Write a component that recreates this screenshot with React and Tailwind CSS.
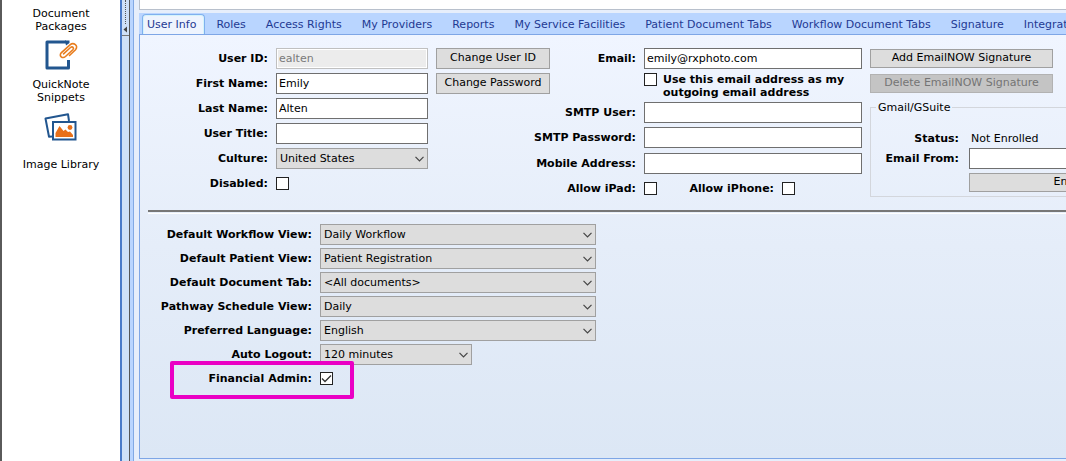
import React, { useState } from 'react';

const tabs = [
  'User Info',
  'Roles',
  'Access Rights',
  'My Providers',
  'Reports',
  'My Service Facilities',
  'Patient Document Tabs',
  'Workflow Document Tabs',
  'Signature',
  'Integrations',
];

const defaults = [
  { id: 'workflow-view', label: 'Default Workflow View:', value: 'Daily Workflow' },
  { id: 'patient-view', label: 'Default Patient View:', value: 'Patient Registration' },
  { id: 'document-tab', label: 'Default Document Tab:', value: '<All documents>' },
  { id: 'schedule-view', label: 'Pathway Schedule View:', value: 'Daily' },
  { id: 'language', label: 'Preferred Language:', value: 'English' },
];

const NoteIcon = () => (
  <svg width="33" height="30" viewBox="0 0 33 30" fill="none">
    <path d="M21 2H2V28H23.500V20" stroke="#22568f" strokeWidth="3" strokeLinejoin="round" />
    <path d="M20 0.500H24.500V3L21 5.500Z" fill="#22568f" />
    <path
      d="M18.500 13.800L25.500 7.500C27.500 5.800 29.500 8 27.800 9.800L20.500 16.500C17.500 19 13.500 16 16.200 12.800L25 4.800C28.500 1.800 34 5.500 30.500 9.800L24.500 15.500"
      stroke="#e87d1e"
      strokeWidth="1.600"
      strokeLinecap="round"
    />
  </svg>
);

const ImagesIcon = () => (
  <svg width="33" height="28" viewBox="0 0 33 28" fill="none">
    <path d="M8 23.500L5 23.800L1.500 5.500L24 1.200L25 8" stroke="#22568f" strokeWidth="2" strokeLinejoin="round" />
    <rect x="9" y="9" width="22.500" height="17.500" fill="#fff" stroke="#22568f" strokeWidth="2" />
    <path d="M11.500 24V20L15.500 13L19.500 18L21.500 16.500L24 19L26 18.500L29 22V24Z" fill="#e8701a" />
    <circle cx="26" cy="14.500" r="2.400" fill="#e8701a" />
  </svg>
);

const Label = ({ htmlFor, className = '', children }) => (
  <span className={`flex shrink-0 justify-end whitespace-nowrap pt-[2px] font-bold ${className}`}>
    <label htmlFor={htmlFor}>{children}</label>
  </span>
);

const TextBox = ({ className = '', ...props }) => (
  <input
    type="text"
    className={`h-[21px] shrink-0 border border-[#6f6f6f] bg-white px-[2px] pb-px disabled:border-[#c0c0c0] disabled:bg-[#ececec] disabled:text-[#7a7a7a] disabled:shadow-[inset_0_0_0_1px_#fff] ${className}`}
    {...props}
  />
);

const CheckBox = ({ id, defaultChecked }) => (
  <span className="relative size-[13px] shrink-0">
    <input
      id={id}
      type="checkbox"
      defaultChecked={defaultChecked}
      className="peer block size-[13px] appearance-none border border-[#222] bg-white"
    />
    <svg viewBox="0 0 13 13" className="pointer-events-none absolute inset-0 hidden peer-checked:block">
      <path d="M2 6.500L5 9.500L11 3.500" fill="none" stroke="#333" strokeWidth="1.300" />
    </svg>
  </span>
);

const Select = ({ id, value, className = '' }) => (
  <span className={`relative h-[21px] shrink-0 ${className}`}>
    <select
      id={id}
      className="block h-full w-full appearance-none border border-[#a0a0a0] bg-[#dddddd] pl-[3px] pr-5 pt-[2px]"
    >
      <option>{value}</option>
    </select>
    <svg width="9" height="6" viewBox="0 0 9 6" className="pointer-events-none absolute right-1 top-2">
      <path d="M0.500 0.800L4.500 4.800L8.500 0.800" fill="none" stroke="#444" strokeWidth="1.200" />
    </svg>
  </span>
);

const Button = ({ className = '', ...props }) => (
  <button
    type="button"
    className={`shrink-0 whitespace-nowrap border border-[#a0a0a0] bg-[#dddddd] disabled:border-[#b2b2b2] disabled:bg-[#c4c4c4] disabled:text-[#747474] ${className}`}
    {...props}
  />
);

const Sidebar = () => (
  <nav className="flex w-[120px] shrink-0 flex-col items-center border-l-2 border-[#5a5a5a] bg-white pt-[7px] text-center leading-[13px]">
    <a href="#packages">Document<br />Packages</a>
    <a href="#snippets" className="mt-[7px] flex flex-col items-center gap-2">
      <NoteIcon />
      <span>QuickNote<br />Snippets</span>
    </a>
    <a href="#images" className="mt-[9px] flex flex-col items-center gap-[17px]">
      <ImagesIcon />
      <span>Image Library</span>
    </a>
  </nav>
);

const Splitter = () => (
  <div className="flex w-[10px] shrink-0 flex-col items-center border-l-2 border-r border-l-[#4a7ac8] border-r-[#555] bg-[#cfe0f7]">
    <div className="h-6 border-l border-dotted border-[#555]" />
    <svg width="5" height="11" viewBox="0 0 5 11">
      <path d="M4 2.500V8.500L0.500 5.500Z" fill="#444" />
    </svg>
    <div className="w-full border-t border-[#777]" />
  </div>
);

const TabBar = ({ active, onSelect }) => (
  <div className="flex h-[22px] shrink-0 overflow-hidden border-b border-[#7ea6e6] bg-[#b9d5ff] pl-[3px] pt-px text-[#1f3a93]">
    {tabs.map((tab) => (
      <button
        key={tab}
        type="button"
        onClick={() => onSelect(tab)}
        className={
          tab === active
            ? 'mr-px h-[21px] shrink-0 rounded-t-sm border border-b-0 border-[#7fb0ee] bg-[#eef4fe] pl-1 pr-2 pt-px shadow-[inset_0_0_0_1px_#d5f3fb]'
            : 'h-[21px] shrink-0 px-[10px] pt-[2px]'
        }
      >
        {tab}
      </button>
    ))}
  </div>
);

const Account = () => (
  <div className="flex flex-col gap-1">
    <div className="flex items-center gap-2">
      <Label htmlFor="user-id" className="w-[120px]">User ID:</Label>
      <TextBox id="user-id" defaultValue="ealten" disabled className="w-[152px]" />
      <Button className="h-[21px] w-[114px]">Change User ID</Button>
    </div>
    <div className="flex items-center gap-2">
      <Label htmlFor="first-name" className="w-[120px]">First Name:</Label>
      <TextBox id="first-name" defaultValue="Emily" className="w-[152px]" />
      <Button className="h-[21px] w-[114px]">Change Password</Button>
    </div>
    <div className="flex items-center gap-2">
      <Label htmlFor="last-name" className="w-[120px]">Last Name:</Label>
      <TextBox id="last-name" defaultValue="Alten" className="w-[152px]" />
    </div>
    <div className="flex items-center gap-2">
      <Label htmlFor="user-title" className="w-[120px]">User Title:</Label>
      <TextBox id="user-title" className="w-[152px]" />
    </div>
    <div className="flex items-center gap-2">
      <Label htmlFor="culture" className="w-[120px]">Culture:</Label>
      <Select id="culture" value="United States" className="w-[152px]" />
    </div>
    <div className="flex h-[21px] items-center gap-2">
      <Label htmlFor="disabled" className="w-[120px]">Disabled:</Label>
      <CheckBox id="disabled" />
    </div>
  </div>
);

const Contact = () => (
  <div className="flex flex-col gap-1">
    <div className="flex items-center gap-2">
      <Label htmlFor="email" className="w-[86px]">Email:</Label>
      <TextBox id="email" defaultValue="emily@rxphoto.com" className="w-[218px]" />
    </div>
    <div className="flex h-[25px] items-start gap-[6px] pl-[94px] font-bold">
      <CheckBox id="outgoing" />
      <label htmlFor="outgoing" className="whitespace-nowrap leading-[13px]">
        Use this email address as my<br />outgoing email address
      </label>
    </div>
    <div className="flex items-center gap-2">
      <Label htmlFor="smtp-user" className="w-[86px]">SMTP User:</Label>
      <TextBox id="smtp-user" className="w-[218px]" />
    </div>
    <div className="flex items-center gap-2">
      <Label htmlFor="smtp-password" className="w-[86px]">SMTP Password:</Label>
      <TextBox id="smtp-password" className="w-[218px]" />
    </div>
    <div className="flex items-center gap-2 pt-px">
      <Label htmlFor="mobile" className="w-[86px]">Mobile Address:</Label>
      <TextBox id="mobile" className="w-[218px]" />
    </div>
    <div className="flex h-[21px] items-center gap-2">
      <Label htmlFor="ipad" className="w-[86px]">Allow iPad:</Label>
      <CheckBox id="ipad" />
      <Label htmlFor="iphone" className="w-[109px]">Allow iPhone:</Label>
      <CheckBox id="iphone" />
    </div>
  </div>
);

const EmailNow = () => (
  <div className="flex flex-col items-start gap-[6px] pt-px">
    <Button className="h-[19px] w-[183px]">Add EmailNOW Signature</Button>
    <Button disabled className="h-[19px] w-[183px]">Delete EmailNOW Signature</Button>
    <fieldset className="mt-[2px] border border-[#d3d6dc] pb-1 pl-[5px] pr-3">
      <legend className="px-[2px] leading-[13px]">Gmail/GSuite</legend>
      <div className="flex items-center gap-3 pt-[17px] leading-[15px]">
        <span className="w-[83px] text-right font-bold">Status:</span>
        <span>Not Enrolled</span>
      </div>
      <div className="flex items-center gap-[10px] pt-[2px]">
        <Label htmlFor="email-from" className="w-[83px]">Email From:</Label>
        <TextBox id="email-from" className="w-[200px]" />
      </div>
      <Button className="ml-[93px] mt-1 block h-[19px] w-[200px]">Enroll</Button>
    </fieldset>
  </div>
);

const Preferences = () => (
  <div className="flex flex-col gap-[3px] pt-[10px]">
    {defaults.map((field) => (
      <div key={field.id} className="flex items-center gap-2">
        <Label htmlFor={field.id} className="w-[164px]">{field.label}</Label>
        <Select id={field.id} value={field.value} className="w-[276px]" />
      </div>
    ))}
    <div className="flex items-center gap-2">
      <Label htmlFor="auto-logout" className="w-[164px]">Auto Logout:</Label>
      <Select id="auto-logout" value="120 minutes" className="w-[152px]" />
    </div>
    <div className="relative flex h-[21px] items-center gap-2">
      <Label htmlFor="financial-admin" className="w-[164px]">Financial Admin:</Label>
      <CheckBox id="financial-admin" defaultChecked />
      {/* callout around the setting */}
      <div className="pointer-events-none absolute -top-[7px] left-[22px] h-[38px] w-[184px] rounded-xs border-4 border-[#ea00c4]" />
    </div>
  </div>
);

const App = () => {
  const [active, setActive] = useState('User Info');

  return (
    <div className="flex min-h-screen overflow-hidden bg-[#e6eefb] font-['Verdana','DejaVu_Sans',sans-serif] text-[11px] text-black">
      <Sidebar />
      <Splitter />
      <div className="w-1 shrink-0 border-r border-[#82a9e4] bg-[#b9d5ff]" />
      <main className="flex min-w-0 flex-1 flex-col pb-[2px] pl-[5px]">
        <div className="h-[10px] shrink-0 border-b border-l border-[#b8c0cc] bg-white" />
        <div className="h-[3px] shrink-0" />
        <TabBar active={active} onSelect={setActive} />
        <section className="flex-1 overflow-hidden border-b border-l border-[#7ea6e6] bg-linear-to-b from-[#f0f5ff] via-[#e5edf9] to-[#dce7f5] pl-2 pt-[13px]">
          <div className="flex items-start gap-2">
            <div className="flex shrink-0 items-start">
              <Account />
              <Contact />
            </div>
            <EmailNow />
          </div>
          <div className="mt-[11px] h-1 border-b border-t-2 border-b-white border-t-[#777]" />
          <Preferences />
        </section>
      </main>
    </div>
  );
};

export default App;
